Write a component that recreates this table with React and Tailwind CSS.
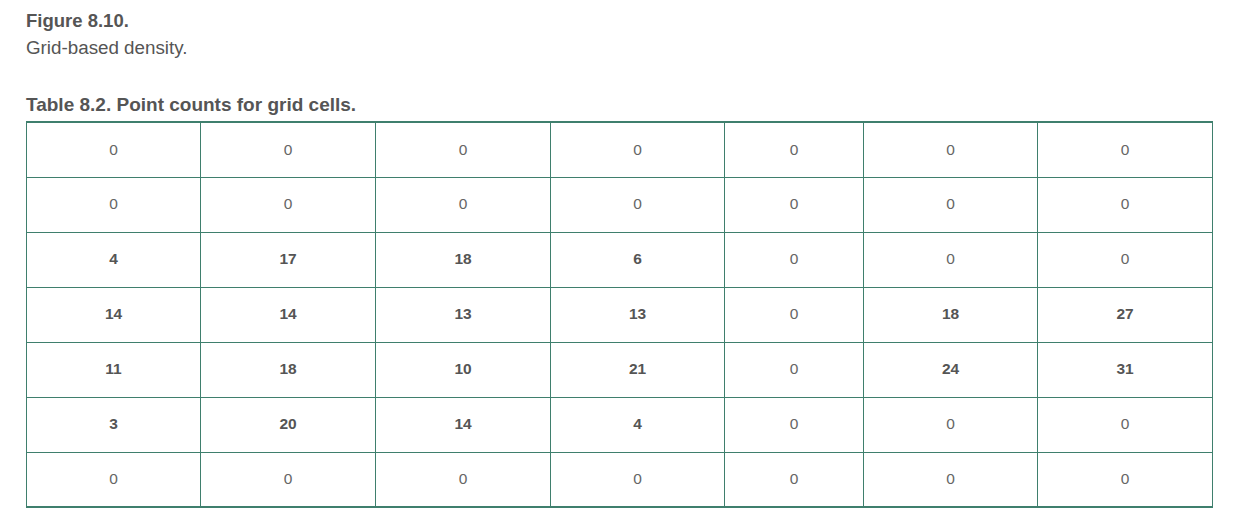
const rows = [
    [0, 0, 0, 0, 0, 0, 0],
    [0, 0, 0, 0, 0, 0, 0],
    [4, 17, 18, 6, 0, 0, 0],
    [14, 14, 13, 13, 0, 18, 27],
    [11, 18, 10, 21, 0, 24, 31],
    [3, 20, 14, 4, 0, 0, 0],
    [0, 0, 0, 0, 0, 0, 0],
];

const widths = ['w-[174px]', 'w-[175px]', 'w-[175px]', 'w-[174px]', 'w-[139px]', 'w-[174px]', 'w-[175px]'];

export default function App() {
    return (
        <div className="min-h-[522px] bg-white px-[26px] pt-[7px] text-[#555] font-['Liberation_Sans',Arial,sans-serif]">
            <p className="text-[18.5px] leading-[27px] font-bold">Figure 8.10.</p>
            <p className="text-[18.8px] leading-[27px]">Grid-based density.</p>

            <p className="mt-[33px] text-[19px] leading-[22px] font-bold">Table 8.2. Point counts for grid cells.</p>

            <table className="mt-[5px] w-[1186px] table-fixed border-collapse border-t-2 border-b-2 border-[#3f7f6d]">
                <colgroup>
                    {widths.map((w, i) => (
                        <col key={i} className={w} />
                    ))}
                </colgroup>
                <tbody>
                    {rows.map((row, r) => (
                        <tr key={r} className="h-[55px]">
                            {row.map((v, c) => (
                                <td
                                    key={c}
                                    className={
                                        'border border-[#3f7f6d] pb-[1px] text-center text-[15.5px] ' +
                                        (v === 0 ? 'font-normal text-[#666]' : 'font-bold text-[#555]')
                                    }
                                >
                                    {v}
                                </td>
                            ))}
                        </tr>
                    ))}
                </tbody>
            </table>
        </div>
    );
}
